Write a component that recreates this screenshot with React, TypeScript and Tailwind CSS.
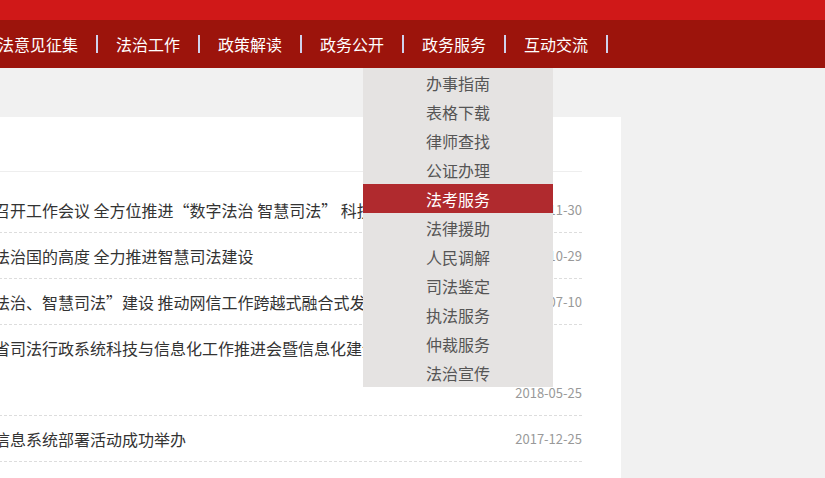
import React from "react";

const navItems = ["立法意见征集", "法治工作", "政策解读", "政务公开", "政务服务", "互动交流"];
const menu = [
  "办事指南",
  "表格下载",
  "律师查找",
  "公证办理",
  "法考服务",
  "法律援助",
  "人民调解",
  "司法鉴定",
  "执法服务",
  "仲裁服务",
  "法治宣传",
];

const rows = [
  { t: "召开工作会议 全方位推进“数字法治 智慧司法” 科技信息化工作再上新台阶", d: "2020-11-30" },
  { t: "法治国的高度 全力推进智慧司法建设", d: "2019-10-29" },
  { t: "法治、智慧司法”建设 推动网信工作跨越式融合式发展", d: "2019-07-10" },
];

export default function App() {
  return (
    <div
      className="relative w-[825px] h-[478px] overflow-hidden bg-[#f1f1f1]"
      style={{ fontFamily: '"Noto Sans CJK SC", "Microsoft YaHei", sans-serif' }}
    >
      <div className="h-[20px] bg-[#d01818]" />
      <nav className="h-[48px] bg-[#9c140c] flex items-center">
        <div className="flex items-center ml-[-18px]">
          {navItems.map((n) => (
            <div key={n} className="flex items-center">
              <span className="text-[16px] leading-[20px] text-white whitespace-nowrap">{n}</span>
              <span className="ml-[18px] mr-[18px] w-[2px] h-[18px] bg-[#cfd2ec]" />
            </div>
          ))}
        </div>
      </nav>

      <div className="mt-[49px] w-[621px] h-[400px] bg-white">
        <div className="ml-[-6px] w-[588px]">
          <div className="h-[55px] border-b border-[#eeeeee]" />
          <div className="pt-[15px]">
            {rows.map((r) => (
              <div
                key={r.d}
                className="flex items-center h-[46px] border-b border-dashed border-[#dddddd]"
              >
                <span className="flex-1 min-w-0 overflow-hidden whitespace-nowrap text-[16px] text-[#333333]">
                  {r.t}
                </span>
                <span className="ml-[6px] text-[13px] text-[#999999] whitespace-nowrap">{r.d}</span>
              </div>
            ))}
            <div className="border-b border-dashed border-[#dddddd]">
              <div className="h-[45px] flex items-center overflow-hidden whitespace-nowrap text-[16px] text-[#333333]">
                省司法行政系统科技与信息化工作推进会暨信息化建设现场观摩会召开
              </div>
              <div className="h-[45px] flex items-center justify-end text-[13px] text-[#999999]">2018-05-25</div>
            </div>
            <div className="flex items-center h-[46px] border-b border-dashed border-[#dddddd]">
              <span className="flex-1 min-w-0 overflow-hidden whitespace-nowrap text-[16px] text-[#333333]">
                信息系统部署活动成功举办
              </span>
              <span className="ml-[6px] text-[13px] text-[#999999] whitespace-nowrap">2017-12-25</span>
            </div>
          </div>
        </div>
      </div>

      <div className="absolute left-[363px] top-[68px] w-[190px] bg-[#e5e3e2]">
        {menu.map((m) => (
          <div
            key={m}
            className={
              m === "法考服务"
                ? "h-[29px] flex items-center justify-center text-[16px] text-white bg-[#b02a2e]"
                : "h-[29px] flex items-center justify-center text-[16px] text-[#555555]"
            }
          >
            {m}
          </div>
        ))}
      </div>
    </div>
  );
}
